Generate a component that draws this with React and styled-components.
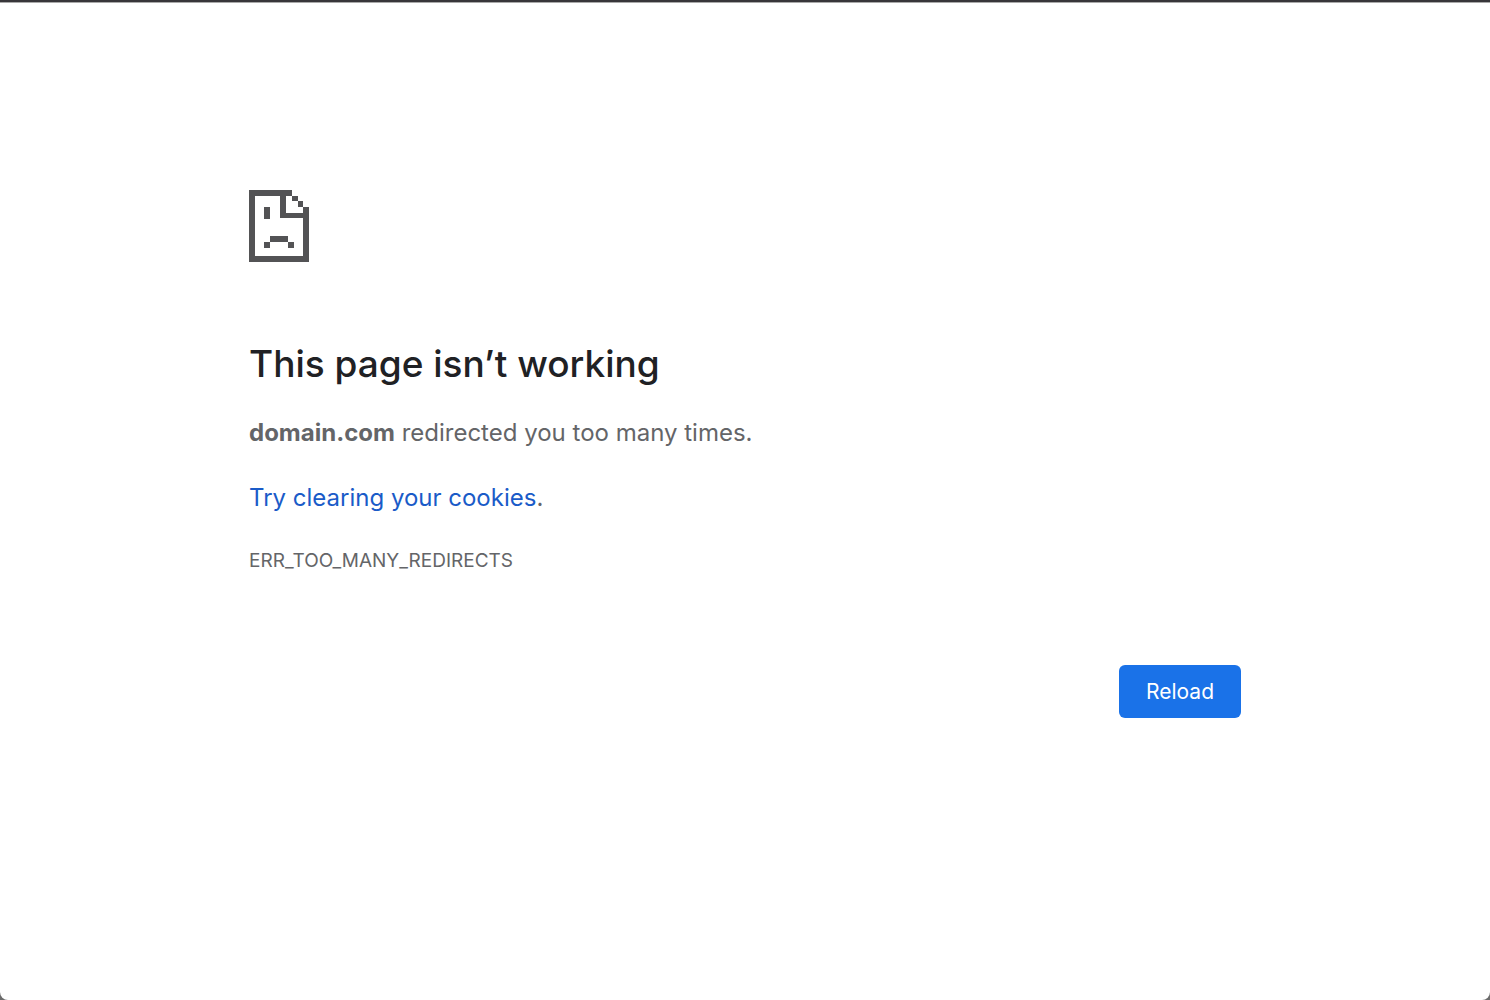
import React from "react";
import styled, { createGlobalStyle } from "styled-components";

const GlobalStyle = createGlobalStyle`
  * { box-sizing: border-box; }
  body {
    margin: 0;
    background: #6b6b6b;
    font-family: Inter, "Liberation Sans", sans-serif;
  }
`;

const Page = styled.div`
  min-height: 100vh;
  background: #fff;
  border-top: 2px solid #38363a;
  border-radius: 0 0 8px 8px;
  box-shadow: inset 0 1px 0 #a9a9a9;
`;

const Content = styled.main`
  max-width: 1040px;
  margin: 0 auto;
  padding: 188px 24px 48px;
  color: #646568;
`;

const SadPage = styled.svg`
  display: block;
  width: 60px;
  height: 72px;
  fill: #535355;
`;

const Title = styled.h1`
  margin: 78px 0 0;
  font-size: 37px;
  line-height: 48px;
  font-weight: 500;
  color: #202124;
`;

const Message = styled.p`
  margin: 25px 0 0;
  font-size: 24px;
  line-height: 40px;
`;

const HelpLink = styled.a`
  color: #1a5bc8;
  text-decoration: none;
`;

const ErrorCode = styled.p`
  margin: 27px 0 0;
  font-size: 19px;
  line-height: 32px;
`;

const Actions = styled.div`
  display: flex;
  justify-content: flex-end;
  margin-top: 88px;
`;

const Button = styled.button`
  padding: 0 27px;
  height: 53px;
  border: 0;
  border-radius: 6px;
  background: #1a72e8;
  color: #fff;
  font: 400 21px/32px Inter, "Liberation Sans", sans-serif;
  cursor: pointer;
`;

function SadPageIcon() {
  return (
    <SadPage viewBox="0 0 60 72" shapeRendering="crispEdges" aria-hidden="true">
      <path d="M0 0H43V6H37V23H54V17H60V72H0ZM6 6V66H54V28H31V6Z" fillRule="evenodd" />
      <path d="M43 6h6v5h-6zM49 11h5v6h-5zM15 17h6v12h-6zM21 46h18v6h-18zM15 52h6v6h-6zM39 52h6v6h-6z" />
    </SadPage>
  );
}

export default function App() {
  return (
    <>
      <GlobalStyle />
      <Page>
        <Content>
          <SadPageIcon />
          <Title>This page isn’t working</Title>
          <Message>
            <strong>domain.com</strong> redirected you too many times.
          </Message>
          <Message>
            <HelpLink href="#cookies">Try clearing your cookies</HelpLink>.
          </Message>
          <ErrorCode>ERR_TOO_MANY_REDIRECTS</ErrorCode>
          <Actions>
            <Button type="button">Reload</Button>
          </Actions>
        </Content>
      </Page>
    </>
  );
}
